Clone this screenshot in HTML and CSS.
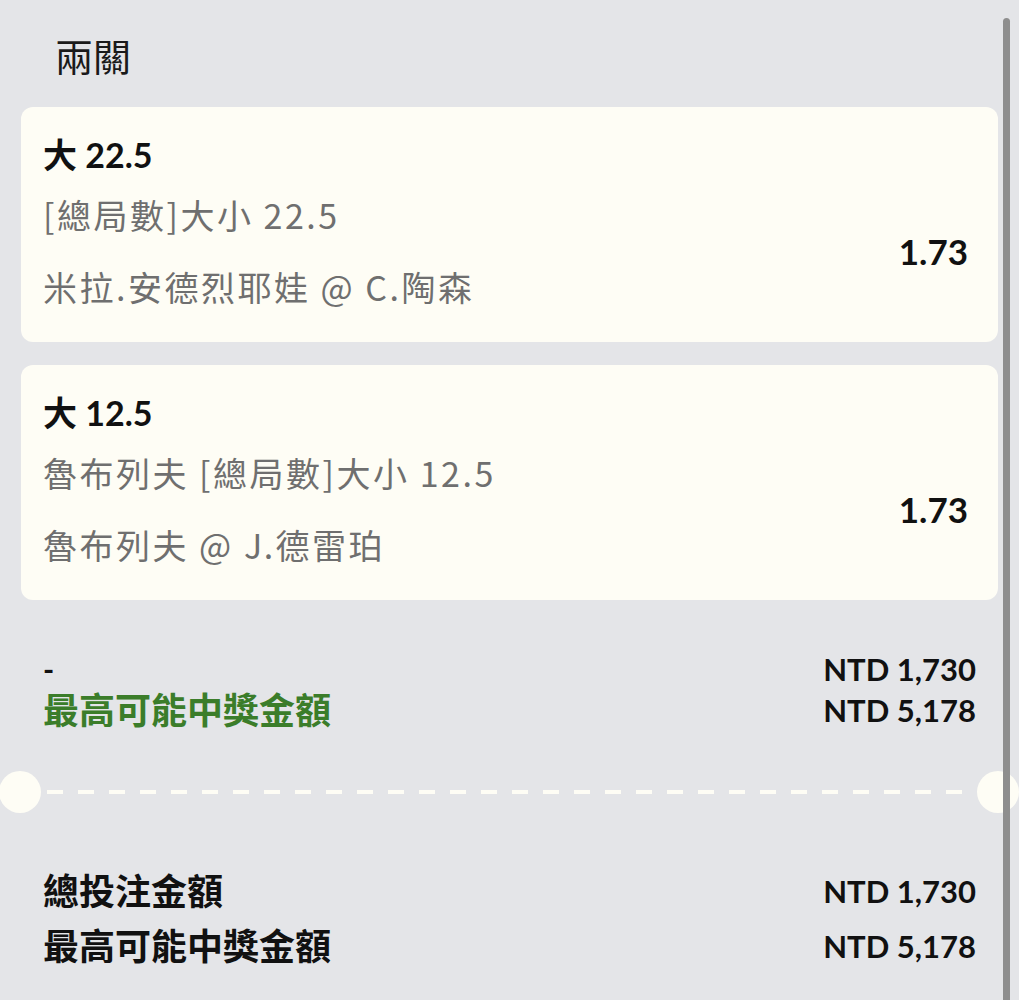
FILE: index.html
```html
<!DOCTYPE html>
<html lang="zh-Hant">
<head>
  <meta charset="UTF-8">
  <title>兩關</title>
  <link rel="stylesheet" href="styles.css">
</head>
<body>
  <div class="scrollbar"></div>

  <h2 class="title">兩關</h2>

  <div class="cards">
    <div class="card">
      <div class="pick">大 22.5</div>
      <div class="row">
        <div class="info">
          <div class="market">[總局數]大小 22.5</div>
          <div class="match">米拉.安德烈耶娃 @ C.陶森</div>
        </div>
        <div class="odds">1.73</div>
      </div>
    </div>

    <div class="card">
      <div class="pick">大 12.5</div>
      <div class="row">
        <div class="info">
          <div class="market">魯布列夫 [總局數]大小 12.5</div>
          <div class="match">魯布列夫 @ J.德雷珀</div>
        </div>
        <div class="odds">1.73</div>
      </div>
    </div>
  </div>

  <div class="summary">
    <div class="label dash">-</div>
    <div class="amount">NTD 1,730</div>
    <div class="label win">最高可能中獎金額</div>
    <div class="amount">NTD 5,178</div>
  </div>

  <div class="divider">
    <span class="hole"></span>
    <span class="dashes"></span>
    <span class="hole"></span>
  </div>

  <div class="totals">
    <div class="label">總投注金額</div>
    <div class="amount">NTD 1,730</div>
    <div class="label">最高可能中獎金額</div>
    <div class="amount">NTD 5,178</div>
  </div>
</body>
</html>
```

FILE: styles.css
```css
body {
  margin: 0;
  background: #e4e5e8;
  font-family: Lato, "Noto Sans CJK TC", sans-serif;
  color: #111;
  height: 1000px;
  overflow: hidden;
}

.scrollbar {
  position: absolute;
  top: 18px;
  left: 1003px;
  width: 7px;
  height: 1000px;
  border-radius: 4px;
  background: #8e8e8e;
}

h2.title {
  margin: 0;
  padding: 35px 0 0 55px;
  font-size: 38px;
  font-weight: 400;
  line-height: 42px;
  color: #1a1a1a;
}

.cards {
  padding: 30px 21px 0 21px;
}
.card {
  background: #fefdf5;
  border-radius: 12px;
  padding: 24px 30px 19px 22px;
  margin-bottom: 23px;
}
.pick {
  font-size: 34px;
  font-weight: 700;
  line-height: 48px;
}
.row {
  display: flex;
  align-items: center;
  justify-content: space-between;
}
.market, .match {
  font-family: "Noto Sans CJK TC", sans-serif;
  font-size: 34px;
  letter-spacing: 2.5px;
  line-height: 72px;
  color: #6f6f6f;
}
.odds {
  font-size: 35px;
  font-weight: 700;
}

.summary, .totals {
  display: grid;
  grid-template-columns: 1fr auto;
  padding: 0 43px;
  font-weight: 700;
}
.summary {
  margin-top: 49px;
  line-height: 41px;
}
.summary .amount, .totals .amount {
  font-size: 31px;
  text-align: right;
}
.label {
  font-size: 36px;
}
.label.dash {
  font-size: 30px;
}
.label.win {
  color: #3b7d2a;
}

.divider {
  display: flex;
  align-items: center;
  margin-top: 40px;
  height: 42px;
}
.hole {
  width: 42px;
  height: 42px;
  border-radius: 50%;
  background: #fefdf5;
  flex: none;
}
.divider .hole:first-child {
  margin-left: -1px;
}
.dashes {
  flex: 1;
  height: 4px;
  margin: 0 6px;
  background: repeating-linear-gradient(to right, #fefdf5 0, #fefdf5 16px, transparent 16px, transparent 31px);
}

.totals {
  margin-top: 51px;
  line-height: 55px;
}
```
